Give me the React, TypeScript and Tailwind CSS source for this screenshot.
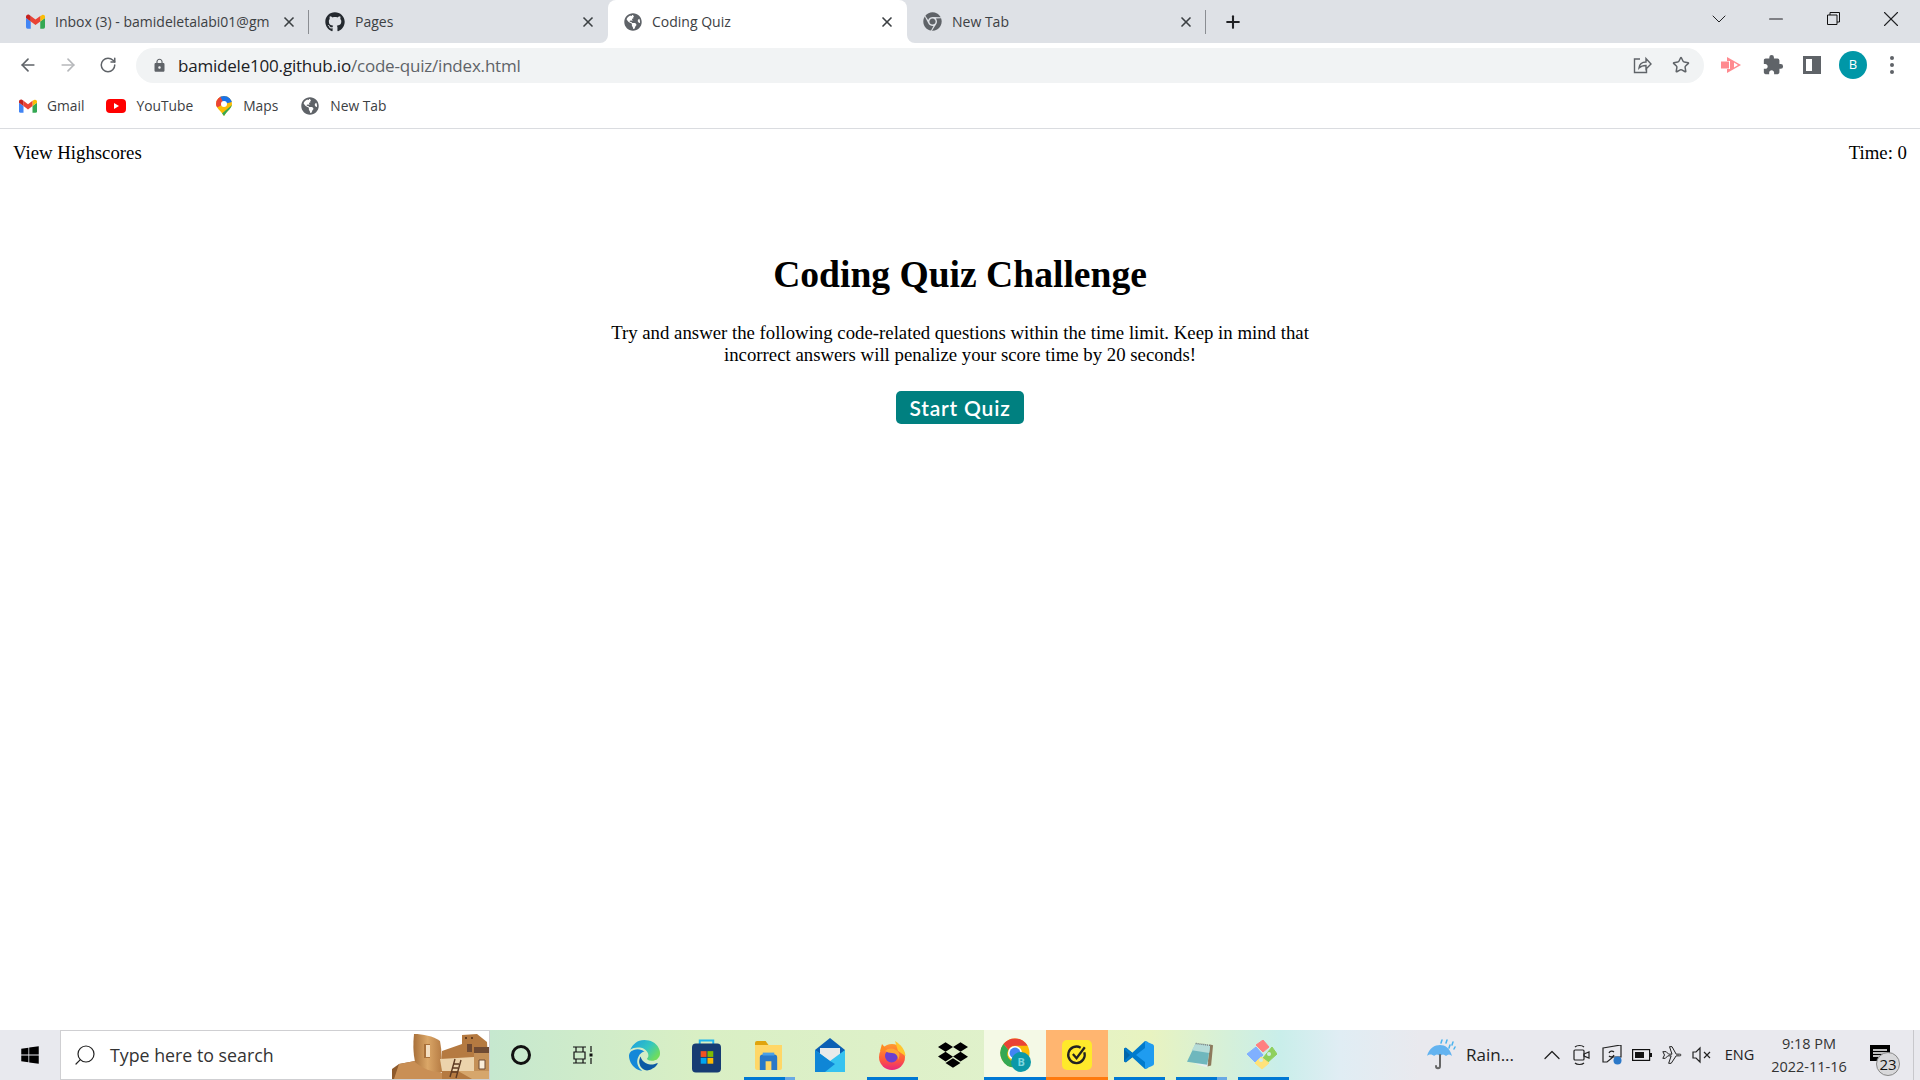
// App.tsx
import React from "react";
import { ArrowLeft, ArrowRight, RotateCw, Star, X, Plus, ChevronDown, ChevronUp, Minus, Search } from "lucide-react";
import { FaGithub, FaGlobeAmericas, FaChrome, FaWindows, FaDropbox } from "react-icons/fa";
import { MdExtension, MdLock } from "react-icons/md";

const chromeFont = { fontFamily: '"Open Sans", "Noto Sans", sans-serif' };

const GmailIcon = ({ className }: { className: string }) => (
  <svg viewBox="0 0 24 18" className={className}>
    <path fill="#4285F4" d="M2 18h4V9L0 4.5V16a2 2 0 0 0 2 2" />
    <path fill="#34A853" d="M18 18h4a2 2 0 0 0 2-2V4.5L18 9" />
    <path fill="#FBBC04" d="M18 2v7l6-4.5V3c0-2-2.3-3.1-3.9-1.9" />
    <path fill="#EA4335" d="M6 9V2l6 4.5L18 2v7l-6 4.5" />
    <path fill="#C5221F" d="M0 3v1.5L6 9V2L4 .6C2.3-.6 0 .9 0 3" />
  </svg>
);

const Flare = ({ side }: { side: "left" | "right" }) => (
  <svg
    viewBox="0 0 8 8"
    className={side === "left" ? "absolute -left-2 bottom-0 w-2 h-2" : "absolute -right-2 bottom-0 w-2 h-2"}
  >
    <path fill="#fff" d={side === "left" ? "M8 0v8H0a8 8 0 0 0 8-8" : "M0 0v8h8a8 8 0 0 1-8-8"} />
  </svg>
);

const Tab = ({
  icon,
  title,
  active,
  sep,
}: {
  icon: React.ReactNode;
  title: string;
  active?: boolean;
  sep?: boolean;
}) => (
  <div
    className={
      active
        ? "relative w-[299px] h-[43px] shrink-0 flex items-center pl-4 pr-3 bg-white rounded-t-lg"
        : "relative w-[299px] h-[43px] shrink-0 flex items-center pl-4 pr-3"
    }
  >
    {icon}
    <span className="ml-[10px] -mt-[1px] flex-1 overflow-hidden whitespace-nowrap text-[14px] text-[#3c4043]">
      {title}
    </span>
    <X size={16} strokeWidth={2.5} className="ml-3 text-[#3c4043] shrink-0" />
    {active && <Flare side="left" />}
    {active && <Flare side="right" />}
    {sep && <div className="absolute right-0 top-[10px] h-[24px] w-px bg-[#8a8d92]" />}
  </div>
);

const Bookmark = ({ icon, label, gap }: { icon: React.ReactNode; label: string; gap: string }) => (
  <div className={`flex items-center shrink-0 ${gap}`}>
    {icon}
    <span className="text-[13.8px] text-[#3c4043] whitespace-nowrap">{label}</span>
  </div>
);

const TabStrip = () => (
  <div className="flex items-start h-[43px] bg-[#dee1e6] pl-[10px]">
    <Tab
      title="Inbox (3) - bamideletalabi01@gm"
      sep
      icon={<GmailIcon className="w-[19px] h-[15px] shrink-0" />}
    />
    <Tab title="Pages" icon={<FaGithub size={20} className="text-[#24292f] shrink-0" />} />
    <Tab active title="Coding Quiz" icon={<FaGlobeAmericas size={18} className="text-[#5f6368] shrink-0" />} />
    <Tab sep title="New Tab" icon={<FaChrome size={19} className="text-[#5f6368] shrink-0" />} />
    <Plus size={20} strokeWidth={2.5} className="ml-[17px] mt-[12px] text-[#202124] shrink-0" />
    <div className="flex-1" />
    <div className="flex items-center h-[37px] text-[#202124]">
      <div className="w-[57.5px] flex justify-center">
        <ChevronDown size={24} strokeWidth={1} />
      </div>
      <div className="w-[57.5px] flex justify-center">
        <Minus size={22} strokeWidth={1.2} />
      </div>
      <div className="w-[57.5px] flex justify-center">
        <svg viewBox="0 0 13 13" className="w-[13px] h-[13px]">
          <path fill="none" stroke="#111" d="M.5 3h9.500v9.500H.5zM3 3V.5h9.500V10H10" />
        </svg>
      </div>
      <div className="w-[57.5px] flex justify-center">
        <X size={26} strokeWidth={1} />
      </div>
    </div>
  </div>
);

const Toolbar = () => (
  <div className="flex items-center h-[43px] pl-[18px] pr-[26px] pt-[1px] bg-white">
    <ArrowLeft size={20} strokeWidth={2} className="text-[#5f6368]" />
    <ArrowRight size={20} strokeWidth={2} className="ml-[20px] text-[#b6b8bb]" />
    <RotateCw size={18} strokeWidth={2} className="ml-[21px] text-[#5f6368]" />
    <div className="ml-[19px] flex-1 h-[35px] rounded-full bg-[#f1f3f4] flex items-center pl-4 pr-[14px]">
      <MdLock size={15} className="text-[#5f6368]" />
      <span className="ml-[11px] mt-[1px] text-[17px] text-[#202124] whitespace-nowrap tracking-[-0.2px]">
        bamidele100.github.io<span className="text-[#5f6368]">/code-quiz/index.html</span>
      </span>
      <div className="flex-1" />
      <svg viewBox="0 0 20 20" className="w-5 h-5 text-[#5f6368] mr-[20px]" fill="none" stroke="currentColor" strokeWidth="1.4">
        <path d="M8 4H2.500v13.500h12V13M7 13c.5-4 3-6 7-6V3.500l5 5.500-5 5v-3.500c-3 0-5 .5-7 2.500z" />
      </svg>
      <Star size={18} strokeWidth={2} className="text-[#5f6368]" />
    </div>
    <svg viewBox="0 0 20 16" className="ml-[17px] w-5 h-4">
      <path fill="#ff8a8f" d="M0 4.500h8v7H0z" />
      <path fill="#ff8a8f" fillRule="evenodd" d="M6 0l14 8-14 8v-4h3V4H6zM13 5.500L17 8l-4 2.500z" />
    </svg>
    <MdExtension size={22} className="ml-[21px] text-[#5f6368]" />
    <div className="ml-[19px] w-[18px] h-[18px] border-[3px] border-r-[9px] border-[#5f6368]" />
    <div className="ml-[18px] w-[28px] h-[28px] rounded-full bg-[#0097a7] text-white text-[13px] flex items-center justify-center">
      B
    </div>
    <div className="ml-[23px] w-[4px] flex flex-col gap-[3px]">
      <div className="w-1 h-1 rounded-full bg-[#5f6368]" />
      <div className="w-1 h-1 rounded-full bg-[#5f6368]" />
      <div className="w-1 h-1 rounded-full bg-[#5f6368]" />
    </div>
  </div>
);

const BookmarksBar = () => (
  <div className="flex items-center h-[43px] pl-[19px] pb-[2px] bg-white border-b border-[#dadce0]">
    <Bookmark gap="gap-[10px] mr-[22px]" label="Gmail" icon={<GmailIcon className="w-[18px] h-[14px]" />} />
    <Bookmark
      gap="gap-[10px] mr-[23px]"
      label="YouTube"
      icon={
        <svg viewBox="0 0 20 14" className="w-5 h-[14px]">
          <rect width="20" height="14" rx="4" fill="#f00" />
          <path fill="#fff" d="M8 4l5 3-5 3z" />
        </svg>
      }
    />
    <Bookmark
      gap="gap-[11px] mr-[23px]"
      label="Maps"
      icon={
        <svg viewBox="0 0 16 20" className="w-4 h-[20px]">
          <clipPath id="mapsPin">
            <path d="M8 0a8 8 0 0 0-8 8c0 4 5 7 8 12 3-5 8-8 8-12a8 8 0 0 0-8-8z" />
          </clipPath>
          <g clipPath="url(#mapsPin)">
            <path fill="#fbbc04" d="M0 0h16v20H0z" />
            <path fill="#1a73e8" d="M3 0h13v6L8 8z" />
            <path fill="#ea4335" d="M0 0h4l4 8-8 4z" />
            <path fill="#34a853" d="M3 20L16 9v11z" />
            <circle cx="8" cy="8" r="3" fill="#fff" />
          </g>
        </svg>
      }
    />
    <Bookmark
      gap="gap-[11px]"
      label="New Tab"
      icon={<FaGlobeAmericas size={18} className="text-[#5f6368]" />}
    />
  </div>
);

const Pueblo = () => (
  <svg viewBox="0 0 97 50" className="absolute right-0 bottom-0 w-[97px] h-[50px]">
    <defs>
      <linearGradient id="wall" x1="0" x2="1" y1="0" y2="0">
        <stop offset="0" stopColor="#a8703a" />
        <stop offset=".5" stopColor="#dba768" />
        <stop offset="1" stopColor="#b67c44" />
      </linearGradient>
    </defs>
    <path fill="#8e5a2c" d="M0 50V40l7-5 16-3 30 18z" />
    <path fill="#c98f55" d="M7 35l16-3 25 11 19 7H2z" />
    <path fill="#b57a41" d="M50 22l20-7V6l15-1 10 8 2 37H50z" />
    <path fill="url(#wall)" d="M22 5c9 0 19 2 26 7 2 10 2 21 2 31-8 1-19-3-27-10-2-9-2-19-1-28z" />
    <path fill="#a8703a" d="M32 15h6v14h-6z" />
    <path fill="#f4dfc2" d="M34 16h4v12h-4z" />
    <path fill="#ecd3ac" d="M48 30l34-2v14H50z" />
    <path fill="#d6a66c" d="M66 42h31v8H80z" />
    <path fill="#6f4a33" d="M75 15h5v8h-5z" />
    <path fill="#6f4a33" d="M82 18h15v6H82z" />
    <path fill="#c49058" d="M82 24h15v18H82z" />
    <path fill="#fbeeda" stroke="#6f4a33" d="M87 31h6v9h-6z" />
    <circle cx="74" cy="9" r="1" fill="#4a2a14" />
    <circle cx="80" cy="9" r="1" fill="#4a2a14" />
    <path fill="none" stroke="#5d3a22" strokeWidth="1.400" d="M63 30l-5 18M69 31l-5 18M61 35h6M60 39h6M59 43h6" />
  </svg>
);

const Cell = ({
  children,
  bar,
  bg,
}: {
  children: React.ReactNode;
  bar?: string;
  bg?: string;
}) => (
  <div className={`relative w-[61.8px] h-[50px] shrink-0 flex items-center justify-center ${bg || ""}`}>
    {children}
    {bar && <div className={`absolute bottom-0 h-[3px] ${bar}`} />}
  </div>
);

const Taskbar = () => (
  <div
    className="flex items-stretch h-[50px] shrink-0 bg-[linear-gradient(90deg,#e8e9ee_0,#e8e9ee_489px,#c6e8cf_490px,#d9efc4_700px,#e0f1cb_1000px,#e8f3c0_1150px,#c9eeea_1280px,#e0edf4_1340px,#e9e9ee_1420px)]"
    style={chromeFont}
  >
    <div className="w-[60px] flex items-center justify-center shrink-0">
      <FaWindows size={20} className="text-black" />
    </div>
    <div className="relative w-[430px] shrink-0 bg-white border border-[#cfcfd2] flex items-center pl-[12px]">
      <Search size={24} strokeWidth={1.2} className="text-[#222] -scale-x-100" />
      <span className="ml-[13px] text-[17.8px] text-[#333]">Type here to search</span>
      <Pueblo />
    </div>
    <Cell>
      <div className="w-[20px] h-[20px] rounded-full border-[3px] border-[#111]" />
    </Cell>
    <Cell>
      <svg viewBox="0 0 20 18" className="w-5 h-[18px]" fill="none" stroke="#111" strokeWidth="1.200">
        <path d="M0 1h13M0 17h13M1 6h11v7H1zM3 1v5M10 1v5M3 13v4M10 13v4M18 0v6M18 12v6" />
        <rect x="16.500" y="7.500" width="3" height="3" fill="#111" stroke="none" />
      </svg>
    </Cell>
    <Cell>
      <svg viewBox="0 0 24 24" className="w-[31px] h-[31px]">
        <defs>
          <linearGradient id="edgeTop" x1="0" x2="1" y1="0" y2=".6">
            <stop offset="0" stopColor="#1b9de2" />
            <stop offset=".6" stopColor="#33c6c0" />
            <stop offset="1" stopColor="#6fdc5e" />
          </linearGradient>
        </defs>
        <path fill="#0c59a4" d="M21.860 17.860q.14 0 .25.12.1.13.1.25t-.11.33l-.32.46-.43.53-.44.5q-.21.25-.38.42l-.22.23q-.58.53-1.34 1.04-.76.51-1.6.91-.86.4-1.74.64t-1.67.24q-.9 0-1.69-.28-.8-.28-1.48-.78-.68-.5-1.22-1.17-.53-.66-.92-1.44-.38-.77-.58-1.6-.2-.83-.2-1.67 0-1 .32-1.96.33-.97.87-1.8.14.95.55 1.77.41.82 1.02 1.5.6.68 1.38 1.21.78.54 1.64.9.86.36 1.77.56.92.2 1.8.2 1.12 0 2.18-.24 1.06-.23 2.06-.72l.2-.1.2-.05z" />
        <path fill="#1488d8" d="M6.360 16.590q0 1.1.27 2.15.27 1.06.78 2.03.51.96 1.24 1.77.74.82 1.66 1.4-1.47-.2-2.8-.74-1.33-.55-2.48-1.37-1.15-.83-2.08-1.9-.92-1.07-1.58-2.33T.36 14.940Q0 13.540 0 12.060q0-.81.32-1.49.31-.68.83-1.23.53-.55 1.2-.96.66-.4 1.35-.66.74-.27 1.5-.39.78-.12 1.55-.12.7 0 1.42.1.72.12 1.4.35.68.23 1.32.57.63.35 1.16.83-.35 0-.7.07-.33.07-.65.23v-.02q-.63.28-1.2.74-.57.46-1.05 1.04-.48.58-.87 1.26-.38.67-.65 1.39-.27.71-.42 1.44-.15.72-.15 1.38z" />
        <path fill="url(#edgeTop)" d="M11.960.06q1.7 0 3.33.39 1.63.38 3.07 1.15 1.43.77 2.62 1.93 1.18 1.16 1.98 2.7.49.94.76 1.96.28 1 .28 2.08 0 .89-.23 1.7-.24.8-.69 1.48-.45.68-1.1 1.22-.64.53-1.45.88-.54.24-1.11.36-.58.13-1.16.13-.42 0-.97-.03-.54-.03-1.1-.12-.55-.1-1.05-.28-.5-.19-.84-.5-.12-.09-.23-.24-.1-.16-.1-.33 0-.15.16-.35.16-.2.35-.5.2-.28.36-.68.16-.4.16-.95 0-1.06-.4-1.96-.4-.91-1.06-1.64-.66-.74-1.52-1.28-.86-.55-1.79-.89-.84-.3-1.72-.44-.87-.14-1.76-.14-1.55 0-3.06.45T.94 7.550q.71-1.74 1.81-3.13Q3.850 3.030 5.200 2.060q1.350-.97 2.920-1.480Q9.700.06 11.960.06z" />
      </svg>
    </Cell>
    <Cell>
      <svg viewBox="0 0 30 36" className="w-[29px] h-[36px]">
        <path fill="none" stroke="#21b5ee" strokeWidth="2" d="M8 9V3h14v6" />
        <rect y="6" width="30" height="30" rx="4" fill="#173c73" />
        <rect x="9" y="14" width="6" height="6" fill="#f25022" />
        <rect x="16" y="14" width="6" height="6" fill="#7fba00" />
        <rect x="9" y="21" width="6" height="6" fill="#00a4ef" />
        <rect x="16" y="21" width="6" height="6" fill="#ffb900" />
      </svg>
    </Cell>
    <Cell bar="left-[7px] w-[51px] bg-[linear-gradient(90deg,#0078d4_0,#0078d4_80%,#6aa9e4_80%)]">
      <svg viewBox="0 0 28 30" className="w-[27px] h-[29px]">
        <path fill="#e0a40d" d="M0 2a2 2 0 0 1 2-2h9l3 4H0z" />
        <path fill="#ffd767" d="M0 4h28v24a2 2 0 0 1-2 2H2a2 2 0 0 1-2-2z" />
        <path fill="#2a78c8" d="M5 30V17a3 3 0 0 1 3-3h12a3 3 0 0 1 3 3v13h-6v-9h-6v9z" />
        <rect x="8" y="12" width="12" height="3" fill="#4aa0e8" />
      </svg>
    </Cell>
    <Cell>
      <svg viewBox="0 0 30 34" className="w-[30px] h-[34px]">
        <path fill="#0b5fb4" d="M0 12L15 0l15 12v4H0z" />
        <path fill="#e9eaea" d="M5 10h20v8l-10 7-10-7z" />
        <path fill="#36c3f0" d="M0 12l15 11 15-11v22H0z" />
        <path fill="#0f86d6" d="M0 34V12l15 11 5 3-10 8z" />
      </svg>
    </Cell>
    <Cell bar="left-[6px] w-[51px] bg-[#0078d4]">
      <svg viewBox="0 0 28 29" className="w-[28px] h-[29px]">
        <defs>
          <linearGradient id="foxBody" x1="0" x2="0" y1="0" y2="1">
            <stop offset="0" stopColor="#ff9a2e" />
            <stop offset=".6" stopColor="#ff5a3a" />
            <stop offset="1" stopColor="#e9257e" />
          </linearGradient>
        </defs>
        <circle cx="14" cy="16" r="13" fill="url(#foxBody)" />
        <path fill="#ff8a1f" d="M2 10l2-7 5 6z" />
        <path fill="#ffc62e" d="M17 0c5 3 10 8 10.500 15L20 10z" />
        <circle cx="13.500" cy="15" r="6.500" fill="#6d3fd0" />
        <path fill="#ffa436" d="M7 10c4-4 11-3 14 2 1 2 0 5-1 7 0-4-2-7-6-7-3 0-5-1-7-2z" />
      </svg>
    </Cell>
    <Cell>
      <FaDropbox size={30} className="text-black" />
    </Cell>
    <Cell bar="left-0 w-full bg-[#0078d4]" bg="bg-[#f4f9e6]">
      <div className="relative w-[30px] h-[30px] -mt-[4px]">
        <svg viewBox="0 0 32 32" className="w-[30px] h-[30px]">
          <circle cx="16" cy="16" r="15.500" fill="#fbbc04" />
          <path fill="#ea4335" d="M16 .5a15.500 15.500 0 0 1 13.400 7.800H16a7.700 7.700 0 0 0-7 4.600L3.600 6.500A15.500 15.500 0 0 1 16 .5z" />
          <path fill="#34a853" d="M3.600 6.500A15.500 15.500 0 0 0 16 31.500l6-10a7.700 7.700 0 0 1-13-8.600z" />
          <circle cx="16" cy="16" r="7.500" fill="#fff" />
          <circle cx="16" cy="16" r="5.800" fill="#4285f4" />
        </svg>
        <div className="absolute left-[11px] top-[14px] w-[20px] h-[20px] rounded-full bg-[#0b98a8] text-[#7bd5df] text-[11px] font-bold flex items-center justify-center">
          B
        </div>
      </div>
    </Cell>
    <Cell bar="left-0 w-full bg-[#ff7a0f]" bg="bg-[#ffb570]">
      <div className="w-[30px] h-[30px] rounded-[5px] bg-[#ffe92b] flex items-center justify-center">
        <svg viewBox="0 0 24 24" className="w-[22px] h-[22px]" fill="none" stroke="#222" strokeWidth="2.500">
          <path d="M20 9a9 9 0 1 1-4-5" />
          <path d="M7.500 11l4 4.500 9-12" />
        </svg>
      </div>
    </Cell>
    <Cell bar="left-[6px] w-[51px] bg-[#0078d4]">
      <svg viewBox="0 0 30 30" className="w-[30px] h-[30px]">
        <path fill="#0065a9" d="M7.500 12L1.800 7.500 0 8.500v13l1.800 1L7.500 18 11 15z" />
        <path fill="#007acc" d="M21 1L8 13l-6-5-2 1 6 6-6 6 2 1 6-5 13 12 3-1V2z" />
        <path fill="#1f9cf0" d="M21 1l7 3c1 .4 2 1 2 2.500v17c0 1.500-1 2-2 2.500l-7 3zM21 8l-9 7 9 7z" />
      </svg>
    </Cell>
    <Cell bar="left-[6px] w-[51px] bg-[linear-gradient(90deg,#0078d4_0,#0078d4_80%,#6aa9e4_80%)]">
      <svg viewBox="0 0 28 26" className="w-[27px] h-[26px]">
        <path fill="#8d7a5c" d="M24 2l3 1-2 21-4 1z" />
        <path fill="#e8efee" d="M8 22l14-2-1 6z" />
        <path fill="#6fb7bd" d="M9 1l15 2-3 20L0 20z" />
        <path fill="#b6dcd8" d="M9 1l15 2-1 8L5 8z" />
        <path fill="none" stroke="#777" strokeWidth="1.500" strokeDasharray="1 1" d="M9 1l15 2" />
      </svg>
    </Cell>
    <Cell bar="left-[6px] w-[51px] bg-[#0078d4]">
      <svg viewBox="0 0 30 30" className="w-[30px] h-[30px]" strokeLinejoin="round" strokeWidth="1">
        <path fill="#ff8080" stroke="#ff8080" d="M9 5l7-5 6 7-6 5z" />
        <path fill="#80b0ff" stroke="#80b0ff" d="M0 14l9-7 7 8-8 7z" />
        <path fill="#8fd05c" stroke="#8fd05c" d="M16 18l9-11 5 7-10 9z" />
        <path fill="#ffe27a" stroke="#ffe27a" d="M8 23l6-6 8 6-7 6z" />
        <circle cx="22" cy="14" r="2" fill="#cdeee6" />
        <circle cx="14" cy="20" r="2" fill="#cdeee6" />
      </svg>
    </Cell>
    <div className="flex-1" />
    <div className="relative flex items-center pr-[14px] text-[#222]">
      <svg viewBox="0 0 30 32" className="w-[30px] h-[32px] mr-[10px]">
        <path fill="#63b3f0" d="M1 17C3 9 9 6 14 6s10 3 12 11c-2-2-4-2-6 0-2-2-4-2-6 0-2-2-4-2-6 0-2-2-5-2-7 0z" />
        <path fill="none" stroke="#666" strokeWidth="2" strokeLinecap="round" d="M14 16v11c0 3-4 3-4 0" />
        <path fill="none" stroke="#4bb3ee" strokeWidth="1.500" strokeLinecap="round" d="M16 1l-1 3M21 1l-1 3M27 3l-1 3M24 6l-1 3M29 8l-1 2" />
      </svg>
      <span className="text-[17px] w-[75.5px]">Rain...</span>
      <ChevronUp size={28} strokeWidth={1.1} className="-ml-[4px] mr-[6px]" />
      <svg viewBox="0 0 20 22" className="w-[20px] h-[22px] mr-[10px]" fill="none" stroke="#222" strokeWidth="1.200">
        <rect x="2" y="6" width="10" height="10" rx="1" />
        <path d="M12 10l5-2v6l-5-2zM3 3c2-2 7-2 9 0M3 19c2 2 7 2 9 0" />
      </svg>
      <svg viewBox="0 0 20 20" className="w-[20px] h-[20px] mr-[10px]" fill="none" stroke="#222" strokeWidth="1.200">
        <path d="M1 3l18-3v12H11l-6 5H1zM7 8a3 3 0 0 1 5-1M12 10a3 3 0 0 1-5 1" />
        <circle cx="15.500" cy="15.500" r="4" fill="#2b78c8" stroke="none" />
      </svg>
      <svg viewBox="0 0 20 12" className="w-[20px] h-[12px] mr-[10px]">
        <rect x=".6" y=".6" width="17" height="10.800" fill="none" stroke="#111" strokeWidth="1.200" />
        <rect x="3" y="3" width="9" height="6" fill="#111" />
        <rect x="18" y="4" width="2" height="4" fill="#111" />
      </svg>
      <svg viewBox="0 0 24 20" className="w-[20px] h-[20px] mr-[10px]" fill="none" stroke="#222" strokeWidth="1.200">
        <path d="M1 6l2 4-2 4h3l3-3h4l-3 9h3l6-9h4c1 0 2-.5 2-1s-1-1-2-1h-4L12 0H9l3 9H8L5 6z" />
      </svg>
      <svg viewBox="0 0 20 20" className="w-[20px] h-[20px] mr-[6px]" fill="none" stroke="#222" strokeWidth="1.200">
        <path d="M1 7h3l4-4v14l-4-4H1zM12 7l6 6M18 7l-6 6" />
      </svg>
      <span className="w-[44px] text-[14.5px] text-center">ENG</span>
      <div className="ml-[7.5px] w-[80px] text-[14.5px] leading-[23px] text-center whitespace-nowrap text-[#333]">
        <div>9:18 PM</div>
        <div>2022-11-16</div>
      </div>
      <div className="relative ml-[21px] mr-[12px] w-[24px] h-[50px] flex items-center">
        <svg viewBox="0 0 20 18" className="w-[20px] h-[18px] -mt-[2px]">
          <path fill="#000" d="M0 0h20v16H0z" />
          <path stroke="#fff" strokeWidth="1.500" d="M3 5h14M3 8h14M3 11h10" />
        </svg>
        <div className="absolute left-[6px] top-[22px] w-[24px] h-[24px] rounded-full bg-[#d8d8da] border border-[#888] text-[15px] flex items-center justify-center text-[#111]">
          23
        </div>
      </div>
      <div className="absolute right-[6px] top-0 h-[50px] w-px bg-[#c8c8cc]" />
    </div>
  </div>
);

const App: React.FC = () => {
  return (
    <div className="w-[1920px] h-screen overflow-hidden bg-white flex flex-col">
      <div style={chromeFont}>
        <TabStrip />
        <Toolbar />
        <BookmarksBar />
      </div>

      {/* Quiz page */}
      <main className="flex-1 text-black font-['Liberation_Serif',serif] text-[18.8px] leading-[22px]">
        <header className="flex justify-between px-[13px] pt-[13px]">
          <span>View Highscores</span>
          <span>Time: 0</span>
        </header>
        <div className="flex flex-col items-center text-center pt-[89px]">
          <h1 className="text-[37.6px] leading-[44px] font-bold">Coding Quiz Challenge</h1>
          <p className="w-[720px] mt-[25px]">
            Try and answer the following code-related questions within the time limit. Keep in mind that incorrect
            answers will penalize your score time by 20 seconds!
          </p>
          <button className="mt-[25px] w-[128px] h-[33px] rounded-[5px] bg-[#008080] text-white text-[21px] tracking-[0.8px] font-semibold font-['Lato',sans-serif]">
            Start Quiz
          </button>
        </div>
      </main>

      <Taskbar />
    </div>
  );
};

export default App;
